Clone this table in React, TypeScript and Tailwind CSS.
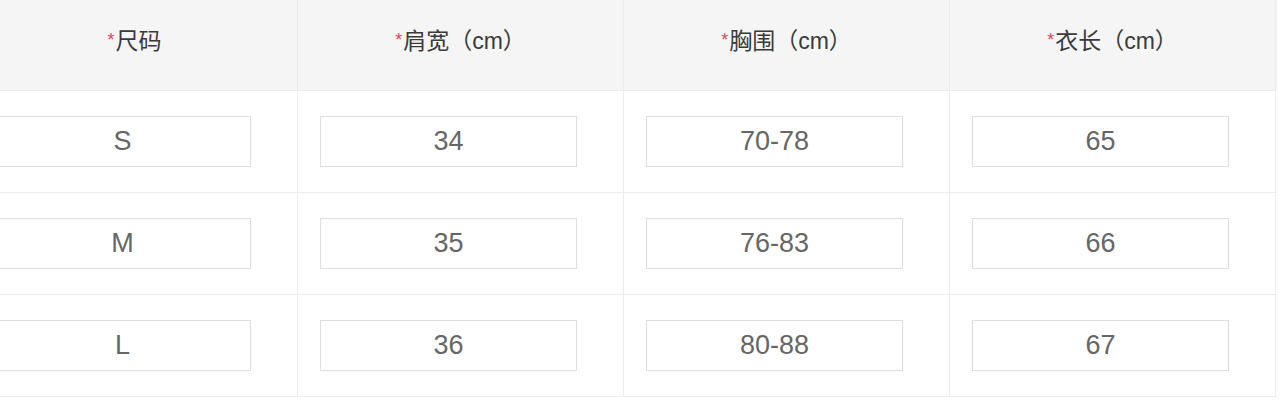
const headers = ["尺码", "肩宽（cm）", "胸围（cm）", "衣长（cm）"];

const rows = [
  ["S", "34", "70-78", "65"],
  ["M", "35", "76-83", "66"],
  ["L", "36", "80-88", "67"],
];

function Cell({ value }: { value: string }) {
  return (
    <div className="w-[326px] h-[101px] flex items-center pl-[22px] border-r border-[#ececec]">
      <input
        readOnly
        value={value}
        className="w-[257px] h-[51px] border border-[#dedede] bg-white text-center text-[27px] text-[#666] outline-none"
        style={{ fontFamily: '"Liberation Sans", Arial, sans-serif' }}
      />
    </div>
  );
}

export default function App() {
  return (
    <div className="w-[1280px] h-[413px] bg-white overflow-hidden">
      <div className="ml-[-28px] w-[1305px]">
        <div className="flex bg-[#f5f5f5] h-[91px] border-b border-[#ececec]">
          {headers.map((h) => (
            <div
              key={h}
              className="w-[326px] h-full flex items-center justify-center pb-[8px] border-r border-[#ececec] text-[23px] text-[#3a3a3a]"
              style={{ fontFamily: '"Liberation Sans", "Noto Sans CJK SC", sans-serif' }}
            >
              <span className="text-[#e0435e] text-[18px] self-start mt-[27px] mr-[1px]">*</span>
              <span>{h}</span>
            </div>
          ))}
        </div>
        {rows.map((r, i) => (
          <div key={i} className="flex border-b border-[#ececec]">
            {r.map((v, j) => (
              <Cell key={j} value={v} />
            ))}
          </div>
        ))}
      </div>
    </div>
  );
}
